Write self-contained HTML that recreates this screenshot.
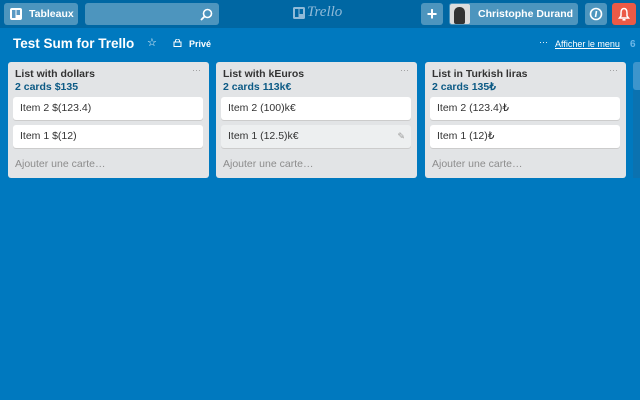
<!DOCTYPE html>
<html><head><meta charset="utf-8"><style>
*{box-sizing:border-box;margin:0;padding:0}
body{width:640px;height:400px;overflow:hidden;background:#0079bf;font-family:"Liberation Sans",Arial,sans-serif;position:relative}
.hdr{position:absolute;left:0;top:0;width:640px;height:28px;background:#0067a3}
.btn{position:absolute;top:3px;height:22px;background:rgba(255,255,255,.3);border-radius:3px;color:#fff;font-weight:bold;font-size:11px;line-height:22px;white-space:nowrap}
.list{position:absolute;top:62px;width:201px;height:116px;background:#e2e4e6;border-radius:3px}
.lt{position:absolute;left:7px;top:6px;font-weight:bold;font-size:10.5px;color:#333;white-space:nowrap}
.ls{position:absolute;left:7px;top:19px;font-weight:bold;font-size:10.5px;color:#0c5a85}
.dots{position:absolute;right:8px;top:3px;color:#999;font-size:9px}
.card{position:absolute;left:5px;width:190px;height:23px;background:#fff;border-radius:3px;box-shadow:0 1px 0 #ccc;font-size:10.5px;color:#333;line-height:23px;padding-left:7px}
.add{position:absolute;left:7px;top:96px;font-size:10.5px;color:#8c8c8c}
</style></head><body>
<div class="hdr"></div>
<div class="btn" style="left:4px;width:74px"><svg style="position:absolute;left:6px;top:5px" width="12" height="12"><rect width="12" height="12" rx="2" fill="#fff"/><rect x="2" y="2" width="3.5" height="8" fill="#5a9ac4"/><rect x="6.5" y="2" width="3.5" height="5" fill="#5a9ac4"/></svg><span style="position:absolute;left:25px;font-size:10.5px">Tableaux</span></div>
<div class="btn" style="left:85px;width:134px"><svg style="position:absolute;right:6px;top:5px" width="13" height="13"><circle cx="7.5" cy="5.5" r="4" stroke="#fff" stroke-width="1.6" fill="none"/><line x1="4.6" y1="8.4" x2="1" y2="12" stroke="#fff" stroke-width="1.8"/></svg></div>
<svg style="position:absolute;left:293px;top:7px" width="12" height="12"><rect width="12" height="12" rx="1.5" fill="#8fbad8"/><rect x="2" y="2" width="3.5" height="8" fill="#0067a3"/><rect x="6.5" y="2" width="3.5" height="5" fill="#0067a3"/></svg>
<div style="position:absolute;left:307px;top:4px;color:#8fbad8;font-size:15px;font-style:italic;font-family:'Liberation Serif',serif">Trello</div>
<div class="btn" style="left:421px;width:22px;text-align:center;font-size:18px">+</div>
<div class="btn" style="left:449px;width:129px"><div style="position:absolute;left:1px;top:1px;width:20px;height:20px;background:#ddd;border-radius:2px;overflow:hidden"><div style="position:absolute;left:4px;top:3px;width:11px;height:17px;background:#333;border-radius:5px 5px 2px 2px"></div></div><span style="position:absolute;left:29px;font-size:10.5px">Christophe Durand</span></div>
<div class="btn" style="left:585px;width:22px"><svg style="position:absolute;left:4px;top:4px" width="14" height="14"><circle cx="7" cy="7" r="5.5" stroke="#fff" stroke-width="1.6" fill="none"/><line x1="7.5" y1="4" x2="6.5" y2="10" stroke="#fff" stroke-width="1.6"/></svg></div>
<div class="btn" style="left:612px;width:24px;background:#eb5a46"><svg style="position:absolute;left:6px;top:4px" width="12" height="14"><path d="M6 1.5C3.5 1.5 3 4 3 6v3L1.5 11h9L9 9V6c0-2-.5-4.5-3-4.5z" stroke="#fff" stroke-width="1.5" fill="none"/><rect x="4.5" y="12" width="3" height="1.6" fill="#fff"/></svg></div>
<div style="position:absolute;left:13px;top:36px;color:#fff;font-weight:bold;font-size:13.5px">Test Sum for Trello</div>
<div style="position:absolute;left:147px;top:36px;color:#fff;font-size:11px">☆</div>
<svg style="position:absolute;left:173px;top:39px" width="9" height="8"><rect x="1" y="3" width="7" height="4.5" stroke="#fff" fill="none"/><path d="M2.5 3V2a2 2 0 0 1 4 0v1" stroke="#fff" fill="none"/></svg>
<div style="position:absolute;left:189px;top:39px;color:#fff;font-size:9px;font-weight:bold">Privé</div>
<div style="position:absolute;left:539px;top:37px;color:#fff;font-size:9px">···</div>
<div style="position:absolute;left:555px;top:39px;color:#fff;font-size:9px;text-decoration:underline">Afficher le menu</div>
<div style="position:absolute;left:630px;top:39px;color:#6cb7e8;font-size:10px;font-weight:bold">6</div>
<div style="position:absolute;left:633px;top:62px;width:7px;height:28px;background:#3d95cc;border-radius:3px 0 0 3px"></div>
<div style="position:absolute;left:633px;top:90px;width:7px;height:88px;background:#0b72b0"></div>

<div class="list" style="left:8px"><div class="lt">List with dollars</div><div class="dots">···</div><div class="ls">2 cards $135</div>
<div class="card" style="top:35px">Item 2 $(123.4)</div><div class="card" style="top:63px">Item 1 $(12)</div><div class="add">Ajouter une carte…</div></div>
<div class="list" style="left:216px"><div class="lt">List with kEuros</div><div class="dots">···</div><div class="ls">2 cards 113k€</div>
<div class="card" style="top:35px">Item 2 (100)k€</div><div class="card" style="top:63px;background:#edeff0">Item 1 (12.5)k€<span style="position:absolute;right:6px;color:#999;font-size:9px">✎</span></div><div class="add">Ajouter une carte…</div></div>
<div class="list" style="left:425px"><div class="lt">List in Turkish liras</div><div class="dots">···</div><div class="ls">2 cards 135₺</div>
<div class="card" style="top:35px">Item 2 (123.4)₺</div><div class="card" style="top:63px">Item 1 (12)₺</div><div class="add">Ajouter une carte…</div></div>
</body></html>
